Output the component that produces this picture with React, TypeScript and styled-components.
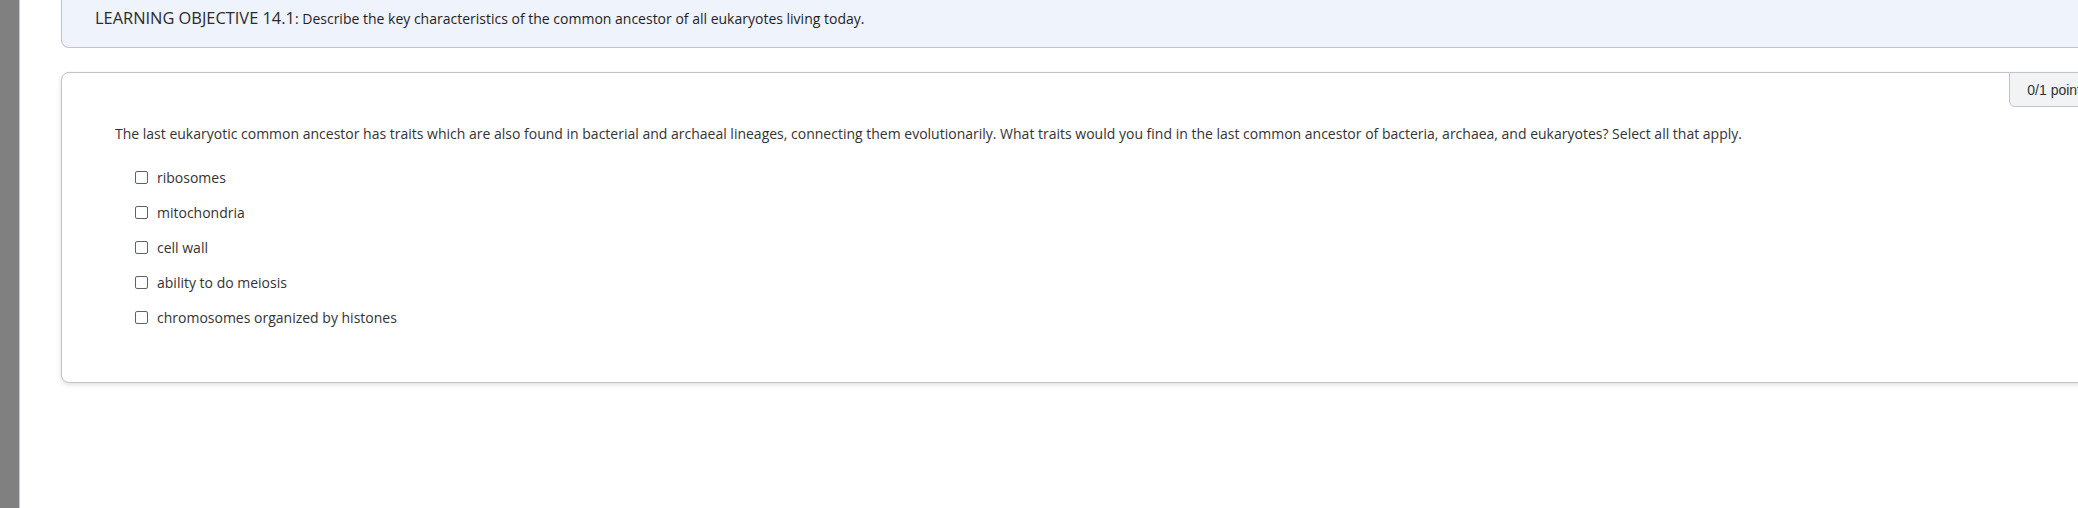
import styled, { createGlobalStyle } from "styled-components";

const GlobalStyle = createGlobalStyle`
  html, body {
    margin: 0;
    padding: 0;
    overflow: hidden;
    background: #ffffff;
  }
  body {
    font-family: "Open Sans", "Liberation Sans", sans-serif;
    color: #333333;
  }
`;

const Page = styled.div`
  display: grid;
  grid-template-columns: 20px 1fr;
  width: 2130px;
  height: 508px;
`;

const SideStrip = styled.div`
  background: #808080;
  border-right: 1px solid #c4c7d0;
`;

const Main = styled.main`
  display: flex;
  flex-direction: column;
  gap: 24px;
  padding: 0 24px 0 41px;
`;

const Objective = styled.div`
  box-sizing: border-box;
  height: 48px;
  padding: 7px 33px 0;
  background: #eff3fc;
  border: 1px solid #c0c3cc;
  border-top: none;
  border-radius: 0 0 8px 8px;
  line-height: 21px;
  font-size: 14px;
  color: #1f1f1f;
`;

const ObjectiveLabel = styled.span`
  font-size: 16.4px;
  color: #2b2b2b;
`;

const QuestionCard = styled.section`
  position: relative;
  box-sizing: border-box;
  padding: 51px 40px 55px 53px;
  background: #ffffff;
  border: 1px solid #c0c3cc;
  border-radius: 8px;
  box-shadow: 0 2px 5px rgba(0, 0, 0, 0.12);
`;

const Points = styled.div`
  position: absolute;
  top: -1px;
  right: -1px;
  box-sizing: border-box;
  height: 35px;
  padding: 0 17px;
  display: flex;
  align-items: center;
  background: #f2f3f5;
  border: 1px solid #c0c3cc;
  border-radius: 0 8px 0 6px;
  font-family: "Liberation Sans", Arial, sans-serif;
  font-size: 14px;
  color: #333;
`;

const QuestionText = styled.p`
  margin: 0;
  font-size: 14px;
  line-height: 20px;
  color: #333;
`;

const Options = styled.div`
  display: flex;
  flex-direction: column;
  gap: 15px;
  margin-top: 23px;
  padding-left: 20px;
`;

const Option = styled.label`
  display: flex;
  align-items: center;
  gap: 9px;
  height: 20px;
  font-size: 14px;
  color: #333;
`;

const Box = styled.span`
  box-sizing: border-box;
  width: 13px;
  height: 13px;
  border: 1px solid #5f6368;
  border-radius: 2px;
  background: #fff;
`;

const choices = [
  "ribosomes",
  "mitochondria",
  "cell wall",
  "ability to do meiosis",
  "chromosomes organized by histones",
];

export default function App() {
  return (
    <>
      <GlobalStyle />
      <Page>
        <SideStrip />
        <Main>
          <Objective>
            <ObjectiveLabel>LEARNING OBJECTIVE 14.1</ObjectiveLabel>: Describe the key
            characteristics of the common ancestor of all eukaryotes living today.
          </Objective>
          <QuestionCard>
            <Points>0/1 points</Points>
            <QuestionText>
              The last eukaryotic common ancestor has traits which are also found in
              bacterial and archaeal lineages, connecting them evolutionarily. What traits
              would you find in the last common ancestor of bacteria, archaea, and
              eukaryotes? Select all that apply.
            </QuestionText>
            <Options>
              {choices.map((c) => (
                <Option key={c}>
                  <Box />
                  {c}
                </Option>
              ))}
            </Options>
          </QuestionCard>
        </Main>
      </Page>
    </>
  );
}
